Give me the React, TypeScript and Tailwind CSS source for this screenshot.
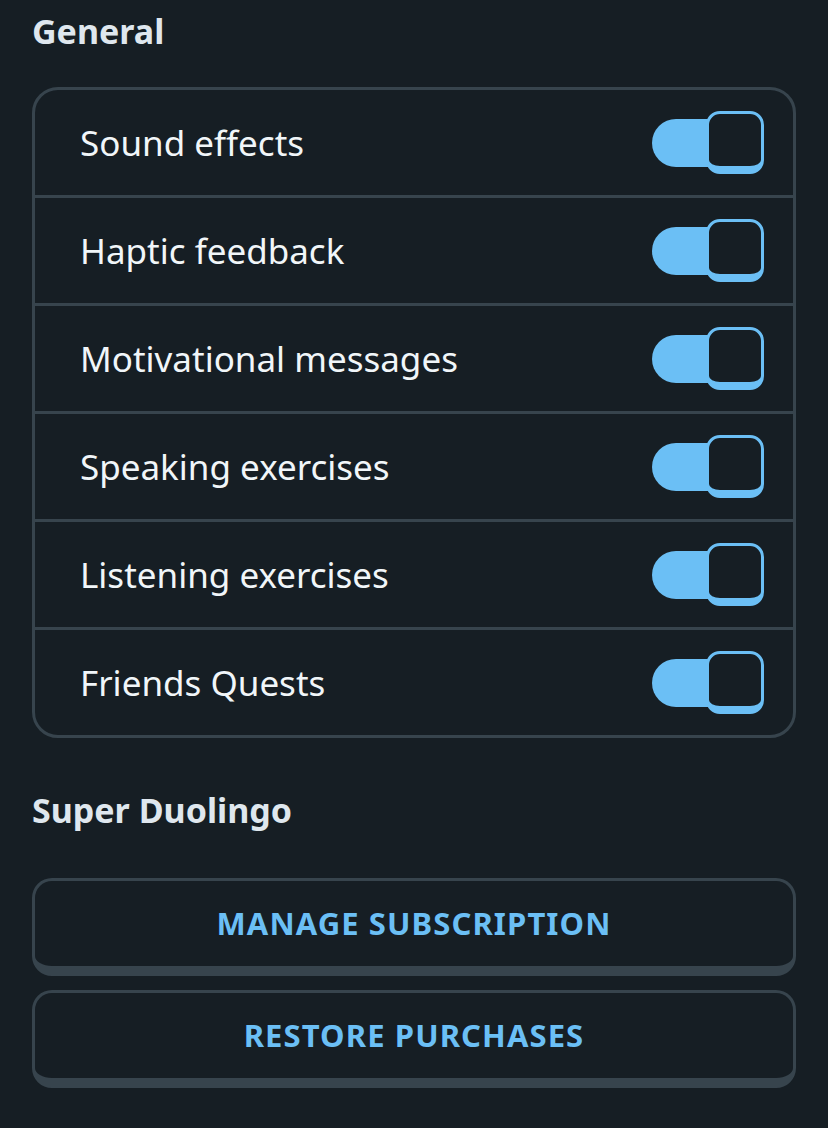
import React from 'react';

const settings = [
    'Sound effects',
    'Haptic feedback',
    'Motivational messages',
    'Speaking exercises',
    'Listening exercises',
    'Friends Quests',
];

const Toggle: React.FC = () => {
    return (
        <div className="flex items-center">
            <div className="h-[48px] w-[70px] rounded-l-full bg-[#6bbff5] -mr-[16px]"></div>
            <div className="relative h-[63px] w-[58px] rounded-[14px] border-[3px] border-b-[8px] border-[#6bbff5] bg-[#161e24]"></div>
        </div>
    );
};

const ActionButton: React.FC<{ label: string }> = ({ label }) => {
    return (
        <button className="flex h-[98px] w-full items-center justify-center rounded-[20px] border-[3px] border-b-[10px] border-[#37444d] bg-[#161e24] text-[31px] font-bold tracking-[1.1px] text-[#6bbff5]">
            {label}
        </button>
    );
};

export default function App() {
    return (
        <div className="min-h-[1128px] w-[828px] bg-[#161e24] px-[32px] pt-[11px] font-['Noto_Sans',sans-serif]">
            <h2 className="text-[34px] font-bold leading-[40px] text-[#dfe7ee]">General</h2>

            <div className="mt-[36px] overflow-hidden rounded-[26px] border-[3px] border-[#37444d]">
                {settings.map((s, i) => (
                    <div
                        key={s}
                        className={`flex items-center justify-between pl-[45px] pr-[29px] ${i > 0 ? 'h-[108px] border-t-[3px] border-[#37444d]' : 'h-[105px]'}`}
                    >
                        <span className="text-[35px] leading-none text-[#f1f6f9]">{s}</span>
                        <Toggle />
                    </div>
                ))}
            </div>

            <h2 className="mt-[52px] text-[34px] font-bold leading-[40px] text-[#dfe7ee]">Super Duolingo</h2>

            <div className="mt-[48px] flex flex-col gap-[14px]">
                <ActionButton label="MANAGE SUBSCRIPTION" />
                <ActionButton label="RESTORE PURCHASES" />
            </div>
        </div>
    );
}
